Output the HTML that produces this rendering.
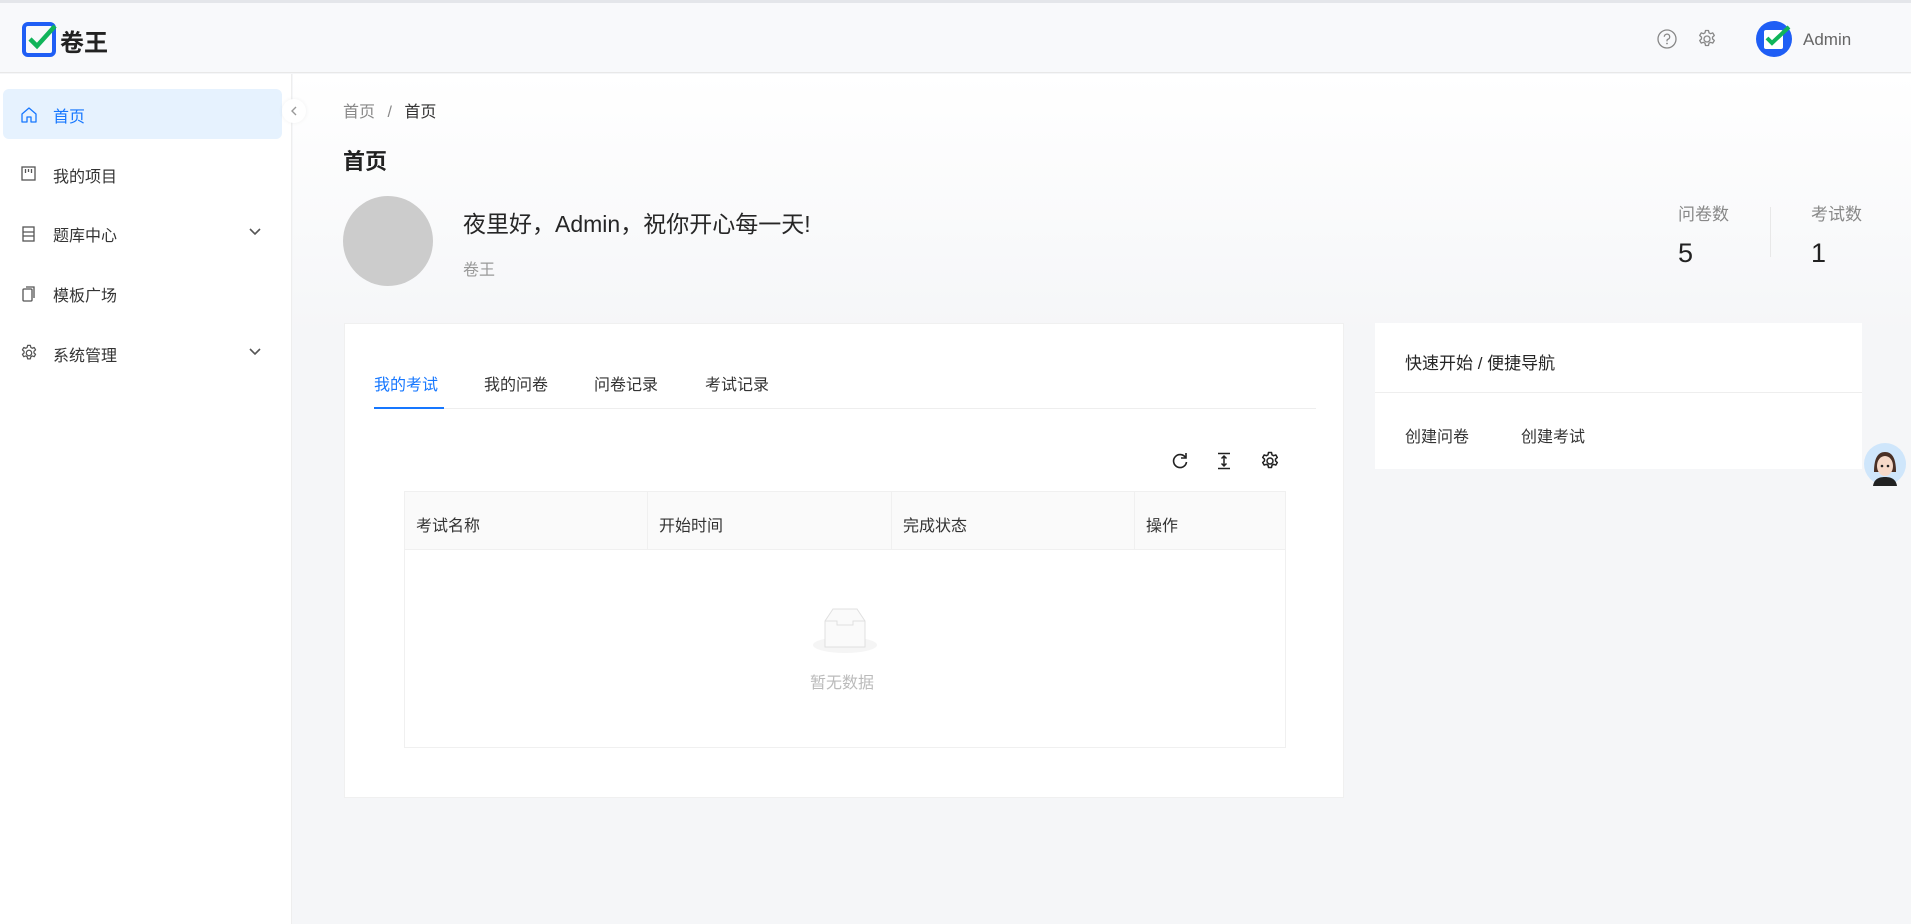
<!DOCTYPE html>
<html><head><meta charset="utf-8"><style>
*{margin:0;padding:0;box-sizing:border-box}
body{width:1911px;height:924px;overflow:hidden;position:relative;font-family:"Liberation Sans","Noto Sans CJK SC",sans-serif;background:#f5f6f8;color:#262626}
.a{position:absolute;white-space:nowrap}
</style></head><body>
<div class="a" style="left:0;top:0;width:1911px;height:3px;background:#e4e6ea"></div>
<div class="a" style="left:0;top:3px;width:1911px;height:70px;background:#f8f9fb;border-bottom:1px solid #e8e8e8"></div>
<svg class="a" style="left:22px;top:22px" width="36" height="36" viewBox="0 0 36 36"><rect x="2" y="2" width="30" height="31" rx="4" fill="none" stroke="#1f5ef5" stroke-width="4"/><path d="M8 17l7 7L33 4" fill="none" stroke="#11b45a" stroke-width="4.5"/></svg>
<div class="a" style="left:60px;top:23px;font-size:24px;font-weight:bold;color:#222">卷王</div>
<svg class="a" style="left:1657px;top:29px" width="20" height="20" viewBox="0 0 20 20"><circle cx="10" cy="10" r="9" fill="none" stroke="#888" stroke-width="1.3"/><path d="M7.3 7.8a2.7 2.7 0 1 1 3.4 2.6c-.5.2-.7.6-.7 1.2v.8" fill="none" stroke="#888" stroke-width="1.3"/><circle cx="10" cy="14.5" r=".9" fill="#888"/></svg>
<svg class="a" style="left:1697px;top:29px" width="20" height="20" viewBox="0 0 20 20"><circle cx="10" cy="10" r="3" fill="none" stroke="#888" stroke-width="1.3"/><path d="M8.5 1.5h3l.5 2.3 1.6.9 2.2-.8 1.5 2.6-1.8 1.6v1.8l1.8 1.6-1.5 2.6-2.2-.8-1.6.9-.5 2.3h-3l-.5-2.3-1.6-.9-2.2.8-1.5-2.6 1.8-1.6V8.1L2.7 6.5l1.5-2.6 2.2.8 1.6-.9z" fill="none" stroke="#888" stroke-width="1.3" stroke-linejoin="round"/></svg>
<svg class="a" style="left:1756px;top:21px" width="36" height="36" viewBox="0 0 36 36"><circle cx="18" cy="18" r="18" fill="#1f5ef5"/><rect x="8" y="9" width="19" height="19" rx="2" fill="#fff"/><path d="M11 17l5 5L33 6" fill="none" stroke="#11b45a" stroke-width="4"/></svg>
<div class="a" style="left:1803px;top:30px;font-size:17px;color:#666">Admin</div>

<div class="a" style="left:0;top:74px;width:292px;height:850px;background:#fff;border-right:1px solid #eee"></div>
<div class="a" style="left:3px;top:89px;width:279px;height:50px;background:#e6f2fe;border-radius:6px"></div>
<svg class="a" style="left:20px;top:106px" width="18" height="18" viewBox="0 0 18 18"><path d="M2 8L9 2l7 6v8H11v-5H7v5H2z" fill="none" stroke="#1677ff" stroke-width="1.3" stroke-linejoin="round"/></svg>
<div class="a" style="left:53px;top:103px;font-size:16px;color:#1677ff">首页</div>
<svg class="a" style="left:20px;top:165px" width="18" height="18" viewBox="0 0 18 18"><rect x="2" y="2" width="13" height="13" fill="none" stroke="#555" stroke-width="1.3"/><path d="M5.5 4v4M8.5 4v3M11.5 4v4" stroke="#555" stroke-width="1.3"/></svg>
<div class="a" style="left:53px;top:163px;font-size:16px;color:#333">我的项目</div>
<svg class="a" style="left:20px;top:225px" width="18" height="18" viewBox="0 0 18 18"><rect x="3" y="2" width="11" height="14" fill="none" stroke="#555" stroke-width="1.3"/><path d="M3 7h11M3 11h11" stroke="#555" stroke-width="1.3"/></svg>
<div class="a" style="left:53px;top:222px;font-size:16px;color:#333">题库中心</div>
<svg class="a" style="left:248px;top:227px" width="14" height="10" viewBox="0 0 14 10"><path d="M2 2l5 5 5-5" fill="none" stroke="#555" stroke-width="1.6"/></svg>
<svg class="a" style="left:20px;top:285px" width="18" height="18" viewBox="0 0 18 18"><rect x="3" y="4" width="9" height="12" rx="1" fill="none" stroke="#555" stroke-width="1.3"/><path d="M6 2h8v11" fill="none" stroke="#555" stroke-width="1.3"/></svg>
<div class="a" style="left:53px;top:282px;font-size:16px;color:#333">模板广场</div>
<svg class="a" style="left:20px;top:344px" width="18" height="18" viewBox="0 0 20 20"><circle cx="10" cy="10" r="3" fill="none" stroke="#555" stroke-width="1.4"/><path d="M8.5 1.5h3l.5 2.3 1.6.9 2.2-.8 1.5 2.6-1.8 1.6v1.8l1.8 1.6-1.5 2.6-2.2-.8-1.6.9-.5 2.3h-3l-.5-2.3-1.6-.9-2.2.8-1.5-2.6 1.8-1.6V8.1L2.7 6.5l1.5-2.6 2.2.8 1.6-.9z" fill="none" stroke="#555" stroke-width="1.4" stroke-linejoin="round"/></svg>
<div class="a" style="left:53px;top:342px;font-size:16px;color:#333">系统管理</div>
<svg class="a" style="left:248px;top:347px" width="14" height="10" viewBox="0 0 14 10"><path d="M2 2l5 5 5-5" fill="none" stroke="#555" stroke-width="1.6"/></svg>

<div class="a" style="left:293px;top:74px;width:1618px;height:260px;background:linear-gradient(#fff,#f5f6f8)"></div>
<div class="a" style="left:282px;top:99px;width:24px;height:24px;border-radius:50%;background:#fff;box-shadow:0 0 4px rgba(0,0,0,.06)"></div>
<svg class="a" style="left:289px;top:105px" width="10" height="12" viewBox="0 0 10 12"><path d="M7 2L3 6l4 4" fill="none" stroke="#999" stroke-width="1.4"/></svg>
<div class="a" style="left:343px;top:98px;font-size:16px;color:#888">首页 <span style="margin:0 8px">/</span> <span style="color:#333">首页</span></div>
<div class="a" style="left:343px;top:144px;font-size:22px;font-weight:bold;color:#222">首页</div>
<div class="a" style="left:343px;top:196px;width:90px;height:90px;border-radius:50%;background:#ccc"></div>
<div class="a" style="left:463px;top:205px;font-size:23px;color:#262626">夜里好，Admin，祝你开心每一天!</div>
<div class="a" style="left:463px;top:256px;font-size:16px;color:#999">卷王</div>
<div class="a" style="left:1678px;top:200px;font-size:17px;color:#888">问卷数</div>
<div class="a" style="left:1678px;top:238px;font-size:27px;color:#222">5</div>
<div class="a" style="left:1770px;top:207px;width:1px;height:50px;background:#e8e8e8"></div>
<div class="a" style="left:1811px;top:200px;font-size:17px;color:#888">考试数</div>
<div class="a" style="left:1811px;top:238px;font-size:27px;color:#222">1</div>

<div class="a" style="left:344px;top:323px;width:1000px;height:475px;background:#fff;border:1px solid #f0f0f0"></div>
<div class="a" style="left:374px;top:371px;font-size:16px;color:#1677ff">我的考试</div>
<div class="a" style="left:484px;top:371px;font-size:16px;color:#333">我的问卷</div>
<div class="a" style="left:594px;top:371px;font-size:16px;color:#333">问卷记录</div>
<div class="a" style="left:705px;top:371px;font-size:16px;color:#333">考试记录</div>
<div class="a" style="left:374px;top:408px;width:942px;height:1px;background:#eee"></div>
<div class="a" style="left:374px;top:407px;width:70px;height:2px;background:#1677ff"></div>
<svg class="a" style="left:1170px;top:451px" width="20" height="20" viewBox="0 0 20 20"><path d="M15.5 6.5A6.5 6.5 0 1 0 16.5 11" fill="none" stroke="#222" stroke-width="1.6"/><path d="M16 2v5h-5" fill="none" stroke="#222" stroke-width="1.6"/></svg>
<svg class="a" style="left:1214px;top:451px" width="20" height="20" viewBox="0 0 20 20"><path d="M4 2.5h12M4 17.5h12M10 5v10M7.5 7.5L10 5l2.5 2.5M7.5 12.5L10 15l2.5-2.5" fill="none" stroke="#222" stroke-width="1.5"/></svg>
<svg class="a" style="left:1260px;top:451px" width="20" height="20" viewBox="0 0 20 20"><circle cx="10" cy="10" r="3" fill="none" stroke="#222" stroke-width="1.5"/><path d="M8.5 1.5h3l.5 2.3 1.6.9 2.2-.8 1.5 2.6-1.8 1.6v1.8l1.8 1.6-1.5 2.6-2.2-.8-1.6.9-.5 2.3h-3l-.5-2.3-1.6-.9-2.2.8-1.5-2.6 1.8-1.6V8.1L2.7 6.5l1.5-2.6 2.2.8 1.6-.9z" fill="none" stroke="#222" stroke-width="1.5" stroke-linejoin="round"/></svg>
<div class="a" style="left:404px;top:491px;width:882px;height:257px;border:1px solid #f0f0f0"></div>
<div class="a" style="left:405px;top:492px;width:880px;height:58px;background:#fafafa;border-bottom:1px solid #f0f0f0"></div>
<div class="a" style="left:647px;top:492px;width:1px;height:58px;background:#f0f0f0"></div>
<div class="a" style="left:891px;top:492px;width:1px;height:58px;background:#f0f0f0"></div>
<div class="a" style="left:1134px;top:492px;width:1px;height:58px;background:#f0f0f0"></div>
<div class="a" style="left:416px;top:512px;font-size:16px;color:#333">考试名称</div>
<div class="a" style="left:659px;top:512px;font-size:16px;color:#333">开始时间</div>
<div class="a" style="left:903px;top:512px;font-size:16px;color:#333">完成状态</div>
<div class="a" style="left:1146px;top:512px;font-size:16px;color:#333">操作</div>
<svg class="a" style="left:805px;top:603px" width="80" height="56" viewBox="0 0 80 56"><ellipse cx="40" cy="42" rx="32" ry="8" fill="#f5f5f5"/><path d="M20 18l8-12h24l8 12v26H20z" fill="#fafafa" stroke="#e0e0e0"/><path d="M20 18h12v4h16v-4h12" fill="none" stroke="#e0e0e0"/></svg>
<div class="a" style="left:810px;top:669px;font-size:16px;color:#bbb">暂无数据</div>

<div class="a" style="left:1375px;top:323px;width:487px;height:146px;background:#fff"></div>
<div class="a" style="left:1375px;top:392px;width:487px;height:1px;background:#eee"></div>
<div class="a" style="left:1405px;top:349px;font-size:17px;color:#262626">快速开始 / 便捷导航</div>
<div class="a" style="left:1405px;top:423px;font-size:16px;color:#333">创建问卷</div>
<div class="a" style="left:1521px;top:423px;font-size:16px;color:#333">创建考试</div>

<svg class="a" style="left:1863px;top:442px" width="44" height="44" viewBox="0 0 44 44"><circle cx="22" cy="22" r="21" fill="#cfe6fb"/><path d="M11 30c0-14 4-20 11-20s11 6 11 20z" fill="#4a3025"/><ellipse cx="22" cy="24" rx="8" ry="10" fill="#f6d9c8"/><path d="M10 44c1-7 6-9 12-9s11 2 12 9z" fill="#222"/><circle cx="19" cy="24" r="1.3" fill="#222"/><circle cx="25" cy="24" r="1.3" fill="#222"/></svg>
</body></html>
